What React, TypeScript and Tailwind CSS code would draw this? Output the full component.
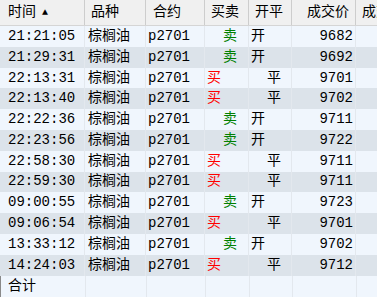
const trades = [
  { time: "21:21:05", side: "卖", oc: "开", price: 9682 },
  { time: "21:29:31", side: "卖", oc: "开", price: 9692 },
  { time: "22:13:31", side: "买", oc: "平", price: 9701 },
  { time: "22:13:40", side: "买", oc: "平", price: 9702 },
  { time: "22:22:36", side: "卖", oc: "开", price: 9711 },
  { time: "22:23:56", side: "卖", oc: "开", price: 9722 },
  { time: "22:58:30", side: "买", oc: "平", price: 9711 },
  { time: "22:59:30", side: "买", oc: "平", price: 9711 },
  { time: "09:00:55", side: "卖", oc: "开", price: 9723 },
  { time: "09:06:54", side: "买", oc: "平", price: 9701 },
  { time: "13:33:12", side: "卖", oc: "开", price: 9702 },
  { time: "14:24:03", side: "买", oc: "平", price: 9712 },
];

const cols = "grid grid-cols-[85px_61px_59px_44px_43px_64px_1fr]";
const cell = "flex items-center overflow-hidden whitespace-nowrap border-r border-[#e3e8ee]";
const head = "flex items-center overflow-hidden whitespace-nowrap border-r border-[#cdcdcd]";

export default function App() {
  return (
    <div
      className="w-[377px] h-[298px] overflow-hidden bg-white text-[14px] text-black"
      style={{ fontFamily: '"Liberation Mono", "Noto Sans CJK SC", monospace' }}
    >
      <div className={`${cols} h-[26px] bg-[#f0f0f0] border-b border-[#d5d5d5]`}>
        <div className={`${head} pl-[8px] gap-[6px]`}>
          <span>时间</span>
          <span className="text-[10px]">▲</span>
        </div>
        <div className={`${head} pl-[6px]`}>品种</div>
        <div className={`${head} pl-[7px]`}>合约</div>
        <div className={`${head} pl-[6px]`}>买卖</div>
        <div className={`${head} pl-[6px]`}>开平</div>
        <div className={`${head} justify-end pr-[6px]`}>成交价</div>
        <div className="flex items-center pl-[6px] whitespace-nowrap">成交量</div>
      </div>

      {trades.map((t, i) => (
        <div
          key={i}
          className={`${cols} h-[20.8px] ${i % 2 === 0 ? "bg-[#f0f6fd]" : "bg-[#dce3ea]"}`}
        >
          <div className={`${cell} pl-[8px]`}>{t.time}</div>
          <div className={`${cell} pl-[3px]`}>棕榈油</div>
          <div className={`${cell} pl-[2px]`}>p2701</div>
          {t.side === "卖" ? (
            <div className={`${cell} pl-[18px] text-[#008000]`}>卖</div>
          ) : (
            <div className={`${cell} pl-[2px] text-[#ff0000]`}>买</div>
          )}
          {t.oc === "开" ? (
            <div className={`${cell} pl-[2px]`}>开</div>
          ) : (
            <div className={`${cell} pl-[18px]`}>平</div>
          )}
          <div className={`${cell} justify-end pr-[2px]`}>{t.price}</div>
          <div />
        </div>
      ))}

      <div className={`${cols} h-[21px] bg-[#f0f6fd] border-l border-[#8a8a8a]`}>
        <div className={`${cell} pl-[7px]`}>合计</div>
        <div className={cell} />
        <div className={cell} />
        <div className={cell} />
        <div className={cell} />
        <div className={cell} />
        <div />
      </div>
    </div>
  );
}
